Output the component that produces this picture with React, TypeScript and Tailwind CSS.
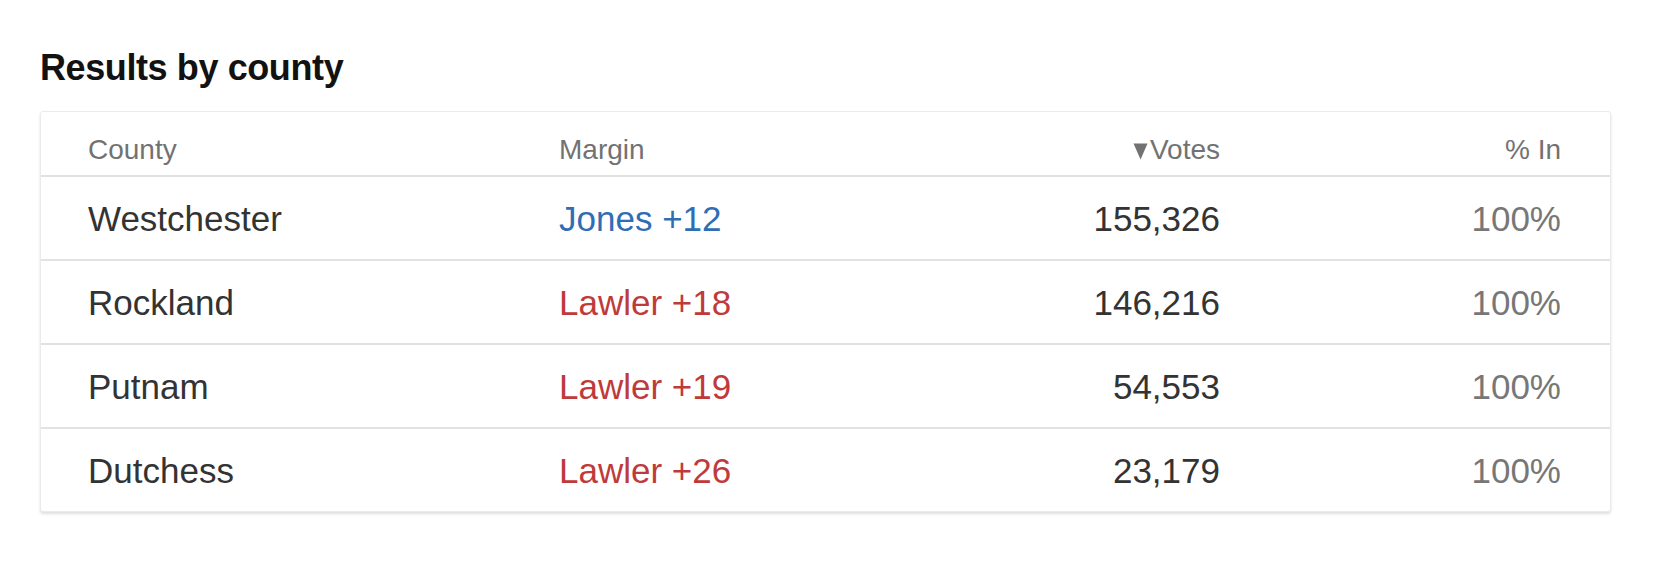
const rows = [
  { county: 'Westchester', leader: 'Jones', margin: 12, party: 'dem', votes: '155,326', pct: '100%' },
  { county: 'Rockland', leader: 'Lawler', margin: 18, party: 'rep', votes: '146,216', pct: '100%' },
  { county: 'Putnam', leader: 'Lawler', margin: 19, party: 'rep', votes: '54,553', pct: '100%' },
  { county: 'Dutchess', leader: 'Lawler', margin: 26, party: 'rep', votes: '23,179', pct: '100%' },
]

function SortArrow() {
  return (
    <svg width="15" height="17" viewBox="0 0 15 17" className="inline-block align-[-1px] mr-[2px]">
      <path d="M0.5 0.5 L14.5 0.5 L7.5 16.5 Z" fill="#727272" />
    </svg>
  )
}

export default function App() {
  return (
    <div className="bg-white min-h-screen pl-[40px] pt-[50px] font-['Liberation_Sans',Arial,sans-serif]">
      <h2 className="text-[36px] leading-[36px] font-bold tracking-[-0.4px] text-[#121212]">
        Results by county
      </h2>

      <div className="mt-[25px] w-[1571px] border border-[#ebebeb] rounded-[3px] bg-white shadow-[0_2px_3px_rgba(0,0,0,0.13)]">
        <div className="grid grid-cols-[471px_330px_331px_1fr] h-[65px] pl-[47px] pr-[49px] pt-[24px] border-b-2 border-[#e2e2e2] text-[28px] leading-[28px] text-[#727272]">
          <div>County</div>
          <div>Margin</div>
          <div className="text-right whitespace-nowrap">
            <SortArrow />
            Votes
          </div>
          <div className="text-right">% In</div>
        </div>

        {rows.map((r, i) => (
          <div
            key={r.county}
            className={
              i === rows.length - 1
                ? 'grid grid-cols-[471px_330px_331px_1fr] items-center h-[82px] pl-[47px] pr-[49px] text-[35px] leading-[35px]'
                : 'grid grid-cols-[471px_330px_331px_1fr] items-center h-[84px] pl-[47px] pr-[49px] text-[35px] leading-[35px] border-b-2 border-[#e2e2e2]'
            }
          >
            <div className="text-[#333333]">{r.county}</div>
            <div className={r.party === 'dem' ? 'text-[#2f6db5]' : 'text-[#bf3a3a]'}>
              {r.leader} +{r.margin}
            </div>
            <div className="text-right text-[#333333]">{r.votes}</div>
            <div className="text-right text-[#777777]">{r.pct}</div>
          </div>
        ))}
      </div>
    </div>
  )
}
